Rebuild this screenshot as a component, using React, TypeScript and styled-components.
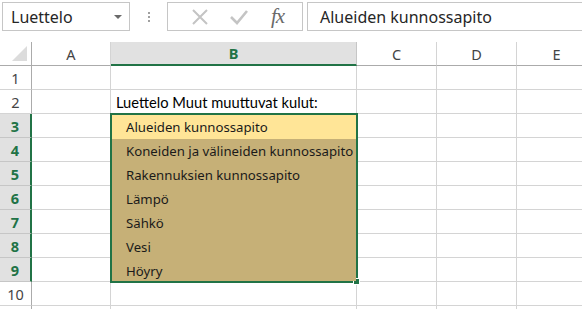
import React from "react";
import styled, { createGlobalStyle } from "styled-components";

const GREEN = "#217346";
const GRID = "#d4d4d4";
const HEAD_LINE = "#ababab";

const GlobalStyle = createGlobalStyle`
  html, body {
    margin: 0;
    padding: 0;
    background: #ffffff;
  }
  body {
    font-family: "Noto Sans", "DejaVu Sans", sans-serif;
  }
`;

const Page = styled.div`
  width: 582px;
  height: 309px;
  overflow: hidden;
  background: #ffffff;
  display: flex;
  flex-direction: column;
`;

const Toolbar = styled.div`
  flex: none;
  height: 42px;
  display: flex;
  align-items: flex-start;
  padding: 2px 0 0 2px;
  box-sizing: border-box;
`;

const NameBox = styled.div`
  width: 128px;
  height: 29px;
  box-sizing: border-box;
  border: 1px solid #c6c6c6;
  display: flex;
  align-items: center;
  justify-content: space-between;
  padding: 0 7px 0 8px;
  font-size: 16px;
  color: #262626;
`;

const Caret = styled.span`
  width: 0;
  height: 0;
  border-left: 4px solid transparent;
  border-right: 4px solid transparent;
  border-top: 4px solid #6a6a6a;
`;

const Grip = styled.div`
  width: 37px;
  height: 29px;
  display: flex;
  flex-direction: column;
  align-items: center;
  justify-content: center;
  gap: 2px;
`;

const GripDot = styled.span`
  width: 2px;
  height: 2px;
  background: #a0a0a0;
`;

const FuncBox = styled.div`
  width: 136px;
  height: 29px;
  box-sizing: border-box;
  border: 1px solid #c6c6c6;
  display: flex;
  align-items: center;
  padding-left: 12px;
`;

const FuncButton = styled.div`
  width: 39px;
  height: 27px;
  display: flex;
  align-items: center;
  justify-content: center;
`;

const Fx = styled.span`
  font-family: "Liberation Serif", "DejaVu Serif", serif;
  font-style: italic;
  font-size: 21px;
  color: #6a6a6a;
  letter-spacing: -1px;
`;

const FormulaInput = styled.div`
  flex: 1;
  margin-left: 4px;
  height: 29px;
  box-sizing: border-box;
  border: 1px solid #c6c6c6;
  border-right: none;
  display: flex;
  align-items: center;
  padding-left: 12px;
  font-size: 16px;
  color: #262626;
`;

const Sheet = styled.div`
  flex: none;
  position: relative;
  display: grid;
  grid-template-columns: 32px 79px 246px 80px 80px 80px;
  grid-auto-rows: 24px;
`;

const Corner = styled.div`
  position: relative;
  box-sizing: border-box;
  border-right: 1px solid ${HEAD_LINE};
  border-bottom: 1px solid ${HEAD_LINE};
  &::after {
    content: "";
    position: absolute;
    right: 4px;
    bottom: 4px;
    width: 0;
    height: 0;
    border-left: 15px solid transparent;
    border-bottom: 15px solid #dcdcdc;
  }
`;

const ColHead = styled.div<{ $active?: boolean }>`
  box-sizing: border-box;
  display: flex;
  align-items: center;
  justify-content: center;
  font-size: 14.5px;
  background: ${(p) => (p.$active ? "#e1e1e1" : "#ffffff")};
  color: ${(p) => (p.$active ? GREEN : "#444444")};
  font-weight: ${(p) => (p.$active ? 700 : 400)};
  border-right: 1px solid ${(p) => (p.$active ? "#c6c6c6" : GRID)};
  border-bottom: ${(p) => (p.$active ? `2px solid ${GREEN}` : `1px solid ${HEAD_LINE}`)};
`;

const RowHead = styled.div<{ $active?: boolean }>`
  box-sizing: border-box;
  display: flex;
  align-items: center;
  justify-content: center;
  font-size: 14.5px;
  background: ${(p) => (p.$active ? "#e1e1e1" : "#ffffff")};
  color: ${(p) => (p.$active ? GREEN : "#444444")};
  font-weight: ${(p) => (p.$active ? 700 : 400)};
  border-right: ${(p) => (p.$active ? `2px solid ${GREEN}` : `1px solid ${HEAD_LINE}`)};
  border-bottom: 1px solid ${(p) => (p.$active ? "#c6c6c6" : GRID)};
`;

const Cell = styled.div`
  box-sizing: border-box;
  border-right: 1px solid ${GRID};
  border-bottom: 1px solid ${GRID};
  display: flex;
  align-items: flex-end;
  padding: 0 0 2px 5px;
  font-family: "Lato", "Noto Sans", sans-serif;
  font-size: 14.7px;
  color: #000000;
  white-space: nowrap;
  overflow: visible;
`;

const Selection = styled.div`
  position: absolute;
  left: 110px;
  top: 71px;
  width: 248px;
  height: 170px;
  box-sizing: border-box;
  border: 2px solid ${GREEN};
  pointer-events: none;
`;

const Handle = styled.span`
  position: absolute;
  right: -4px;
  bottom: -4px;
  width: 5px;
  height: 5px;
  background: ${GREEN};
  border: 1px solid #ffffff;
`;

const DropList = styled.ul`
  position: absolute;
  left: 112px;
  top: 73px;
  width: 244px;
  height: 166px;
  margin: 0;
  padding: 0;
  list-style: none;
  background: #c6b077;
  display: flex;
  flex-direction: column;
`;

const DropItem = styled.li<{ $active?: boolean }>`
  height: 24px;
  flex: none;
  display: flex;
  align-items: center;
  padding-left: 14px;
  font-size: 13.2px;
  color: #1a1a1a;
  white-space: nowrap;
  background: ${(p) => (p.$active ? "#ffe597" : "transparent")};
`;

const columns = ["A", "B", "C", "D", "E"];
const rows = [1, 2, 3, 4, 5, 6, 7, 8, 9, 10, 11];
const items = [
  "Alueiden kunnossapito",
  "Koneiden ja välineiden kunnossapito",
  "Rakennuksien kunnossapito",
  "Lämpö",
  "Sähkö",
  "Vesi",
  "Höyry",
];

const CrossIcon = () => (
  <svg width="18" height="18" viewBox="0 0 18 18">
    <path d="M2 2 L16 16 M16 2 L2 16" stroke="#c4c4c4" strokeWidth="2" fill="none" />
  </svg>
);

const CheckIcon = () => (
  <svg width="20" height="18" viewBox="0 0 20 18">
    <path d="M2 9 L8 15 L18 3" stroke="#c4c4c4" strokeWidth="2.6" fill="none" />
  </svg>
);

export default function App() {
  return (
    <Page>
      <GlobalStyle />
      <Toolbar>
        <NameBox>
          Luettelo
          <Caret />
        </NameBox>
        <Grip>
          <GripDot />
          <GripDot />
          <GripDot />
        </Grip>
        <FuncBox>
          <FuncButton>
            <CrossIcon />
          </FuncButton>
          <FuncButton>
            <CheckIcon />
          </FuncButton>
          <FuncButton>
            <Fx>fx</Fx>
          </FuncButton>
        </FuncBox>
        <FormulaInput>Alueiden kunnossapito</FormulaInput>
      </Toolbar>
      <Sheet>
        <Corner />
        {columns.map((c) => (
          <ColHead key={c} $active={c === "B"}>
            {c}
          </ColHead>
        ))}
        {rows.map((r) => (
          <React.Fragment key={r}>
            <RowHead $active={r >= 3 && r <= 9}>{r <= 10 ? r : ""}</RowHead>
            {columns.map((c) => (
              <Cell key={c}>{r === 2 && c === "B" ? "Luettelo Muut muuttuvat kulut:" : ""}</Cell>
            ))}
          </React.Fragment>
        ))}
        <Selection>
          <Handle />
        </Selection>
        <DropList>
          {items.map((item, i) => (
            <DropItem key={item} $active={i === 0}>
              {item}
            </DropItem>
          ))}
        </DropList>
      </Sheet>
    </Page>
  );
}
